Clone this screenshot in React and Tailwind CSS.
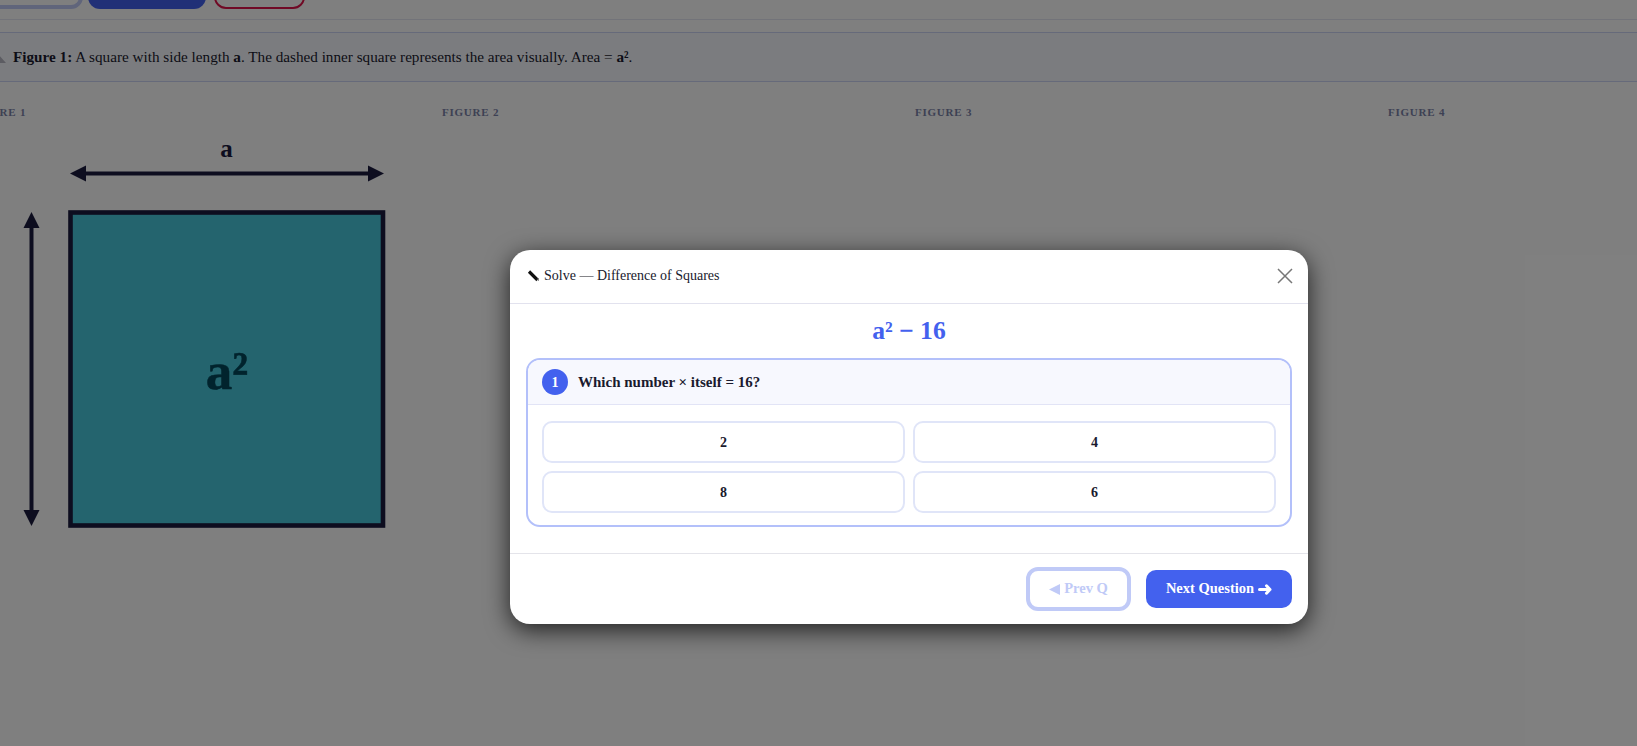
const serif = { fontFamily: '"Liberation Serif", "Times New Roman", serif' };

function Figure() {
  return (
    <svg width="400" height="410" viewBox="0 0 400 410" className="block">
      <g fill="#1a1a3e" stroke="none">
        <rect x="84" y="40.5" width="286" height="4" />
        <polygon points="70,42.5 86,34.5 86,50.5" />
        <polygon points="384,42.5 368,34.5 368,50.5" />
        <rect x="29.5" y="95" width="4" height="286" />
        <polygon points="31.5,81 23.5,97 39.5,97" />
        <polygon points="31.5,395 23.5,379 39.5,379" />
      </g>
      <text x="226.5" y="26" textAnchor="middle" fontSize="25" fontWeight="700" fill="#1a1a3e" fontFamily="Liberation Serif">a</text>
      <rect x="70.5" y="81.5" width="312.5" height="313" fill="#48c9dd" stroke="#1a1a3e" strokeWidth="4.6" />
      <text x="227" y="258" textAnchor="middle" fontSize="53" fontWeight="700" fill="#03475a" stroke="#03475a" strokeWidth="0.5" fontFamily="Liberation Serif">a²</text>
    </svg>
  );
}

function Option({ children }) {
  return (
    <button className="h-[42px] rounded-[10px] border-2 border-[#e0e5f8] bg-white text-[14px] font-bold text-[#1a1a2e]">
      {children}
    </button>
  );
}

const label = "h-[14px] text-[11px] leading-[14px] font-bold tracking-[0.07em] text-[#7a82a8]";

export default function App() {
  return (
    <div style={serif} className="relative h-[746px] w-[1637px] overflow-hidden bg-white text-[#1a1a2e]">
      <div className="-mt-[32px] -ml-[20px] flex h-[41px]">
        <div className="w-[103px] rounded-[12px] border-4 border-[#c0caf7] bg-white" />
        <div className="ml-[5px] w-[118px] rounded-[12px] bg-[#4361ee]" />
        <div className="ml-[8px] w-[91px] rounded-[12px] border-2 border-[#e0134a] bg-white" />
      </div>
      <div className="mt-[10px] border-b border-[#e4e6f2]" />
      <div className="mt-[12px] flex h-[50px] items-center gap-[6px] border-y border-[#cdd5f5] bg-[#f7f9ff] pt-[1px] text-[15.2px]">
        <svg width="7" height="10" viewBox="0 0 7 10" className="mt-[3px] shrink-0">
          <polygon points="-4,9 6,9 -1,1" fill="#b8b8c4" />
        </svg>
        <p>
          <b>Figure 1:</b> A square with side length <b>a</b>. The dashed inner square represents the area visually. Area = <b>a²</b>.
        </p>
      </div>
      <div className="-ml-[31px] mt-[23px] grid w-[1892px] grid-cols-4">
        <div>
          <div className={label}>FIGURE 1</div>
          <div className="ml-[31px] mt-[12px]"><Figure /></div>
        </div>
        <div className={label}>FIGURE 2</div>
        <div className={label}>FIGURE 3</div>
        <div className={label}>FIGURE 4</div>
      </div>

      <div className="absolute inset-0 bg-black/50" />

      <div className="absolute left-[510px] top-[250px] h-[374px] w-[798px] overflow-hidden rounded-[20px] bg-white shadow-[0_6px_24px_rgba(0,0,0,0.75)]">
        <div className="flex h-[54px] items-center justify-between border-b border-[#e2e2ee] pl-[17px] pr-[15px]">
          <span className="flex items-center gap-[4px] text-[14px] leading-[20px] -mt-[2px] text-[#1a1a2e]">
            <svg width="13" height="12" viewBox="0 0 13 12" className="shrink-0">
              <path d="M2 1.5 L10.5 10" stroke="#111" strokeWidth="3.2" />
              <path d="M9.5 9 L12 11.2 L11.4 8" fill="#555" />
            </svg>
            Solve — Difference of Squares
          </span>
          <svg width="16" height="16" viewBox="0 0 16 16" fill="none" stroke="#777" strokeWidth="1.5" className="-mt-[2px]">
            <path d="M1 1 L15 15 M15 1 L1 15" />
          </svg>
        </div>
        <div className="flex h-[54px] items-center justify-center text-[25.6px] font-bold text-[#4361ee]">a² − 16</div>
        <div className="mx-[16px] h-[169px] overflow-hidden rounded-[14px] border-2 border-[#b3c0fa]">
          <div className="flex h-[45px] items-center gap-[10px] border-b border-[#e2e4f6] bg-[#f7f8fe] pl-[14px]">
            <span className="flex h-[26px] w-[26px] items-center justify-center rounded-full bg-[#4361ee] text-[14px] font-bold text-white">1</span>
            <span className="text-[15px] font-bold text-[#1a1a2e]">Which number × itself = 16?</span>
          </div>
          <div className="grid grid-cols-2 gap-[8px] px-[14px] pt-[16px]">
            <Option>2</Option>
            <Option>4</Option>
            <Option>8</Option>
            <Option>6</Option>
          </div>
        </div>
        <div className="mt-[26px] flex h-[71px] items-center justify-end gap-[15px] border-t border-[#e4e4ea] pr-[16px]">
          <button className="flex h-[44px] w-[105px] items-center justify-center gap-[4px] rounded-[12px] border-4 border-[#c0caf7] bg-white text-[14.5px] font-bold text-[#c0caf7]">
            <svg width="11" height="11" viewBox="0 0 11 11" className="shrink-0">
              <polygon points="0,5.5 11,0 11,11" fill="#c0caf7" />
            </svg>
            Prev Q
          </button>
          <button className="flex h-[38px] w-[146px] items-center justify-center gap-[4px] rounded-[10px] bg-[#4361ee] text-[14.5px] font-bold text-white">
            Next Question
            <svg width="14" height="11" viewBox="0 0 14 11" className="shrink-0" fill="none" stroke="#fff" strokeWidth="3" strokeLinecap="round" strokeLinejoin="round">
              <path d="M1.5 5.5 H12 M8.5 1.8 L12 5.5 L8.5 9.2" />
            </svg>
          </button>
        </div>
      </div>
    </div>
  );
}
